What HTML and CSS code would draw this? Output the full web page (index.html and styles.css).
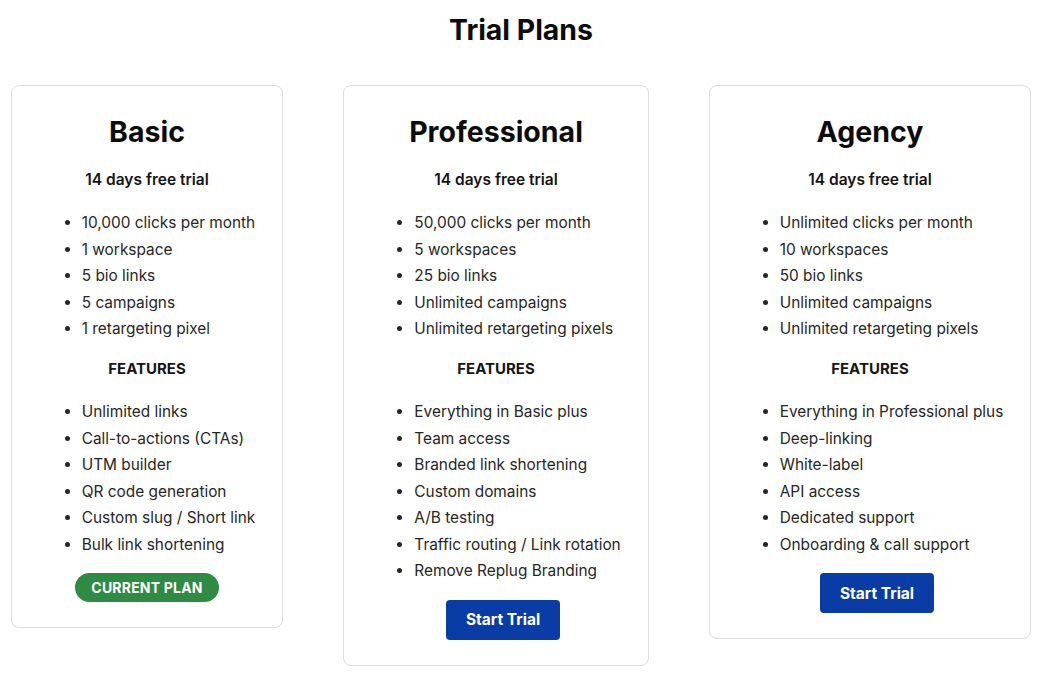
FILE: index.html
```html
<!DOCTYPE html>
<html lang="en">
<head>
<meta charset="utf-8">
<title>Trial Plans</title>
<link rel="stylesheet" href="styles.css">
</head>
<body>
<main class="page">
  <h1 class="page-title">Trial Plans</h1>
  <div class="plans">
    <section class="card">
      <h2 class="plan-name">Basic</h2>
      <p class="trial">14 days free trial</p>
      <ul class="list">
        <li>10,000 clicks per month</li>
        <li>1 workspace</li>
        <li>5 bio links</li>
        <li>5 campaigns</li>
        <li>1 retargeting pixel</li>
      </ul>
      <h3 class="features">FEATURES</h3>
      <ul class="list">
        <li>Unlimited links</li>
        <li>Call-to-actions (CTAs)</li>
        <li>UTM builder</li>
        <li>QR code generation</li>
        <li>Custom slug / Short link</li>
        <li>Bulk link shortening</li>
      </ul>
      <span class="current">CURRENT PLAN</span>
    </section>
    <section class="card">
      <h2 class="plan-name">Professional</h2>
      <p class="trial">14 days free trial</p>
      <ul class="list">
        <li>50,000 clicks per month</li>
        <li>5 workspaces</li>
        <li>25 bio links</li>
        <li>Unlimited campaigns</li>
        <li>Unlimited retargeting pixels</li>
      </ul>
      <h3 class="features">FEATURES</h3>
      <ul class="list">
        <li>Everything in Basic plus</li>
        <li>Team access</li>
        <li>Branded link shortening</li>
        <li>Custom domains</li>
        <li>A/B testing</li>
        <li>Traffic routing / Link rotation</li>
        <li>Remove Replug Branding</li>
      </ul>
      <button class="trial-btn" type="button">Start Trial</button>
    </section>
    <section class="card">
      <h2 class="plan-name">Agency</h2>
      <p class="trial">14 days free trial</p>
      <ul class="list">
        <li>Unlimited clicks per month</li>
        <li>10 workspaces</li>
        <li>50 bio links</li>
        <li>Unlimited campaigns</li>
        <li>Unlimited retargeting pixels</li>
      </ul>
      <h3 class="features">FEATURES</h3>
      <ul class="list">
        <li>Everything in Professional plus</li>
        <li>Deep-linking</li>
        <li>White-label</li>
        <li>API access</li>
        <li>Dedicated support</li>
        <li>Onboarding &amp; call support</li>
      </ul>
      <button class="trial-btn" type="button">Start Trial</button>
    </section>
  </div>
</main>
</body>
</html>
```

FILE: styles.css
```css
* { box-sizing: border-box; }

body {
  margin: 0;
  background: #ffffff;
  color: #111111;
  font-family: Inter, "Noto Sans", "Liberation Sans", sans-serif;
}

.page {
  width: 1042px;
  padding-top: 12px;
}

.page-title {
  margin: 0 0 37px;
  text-align: center;
  font-size: 28.4px;
  line-height: 36px;
  font-weight: 700;
  color: #0c0c0c;
}

.plans {
  display: flex;
  justify-content: center;
  align-items: flex-start;
  gap: 60px;
}

.card {
  display: flex;
  flex-direction: column;
  align-items: center;
  padding: 28px 28px 25px;
  border: 1px solid #dcdcdc;
  border-radius: 8px;
  background: #fff;
}

.plan-name {
  margin: 0 0 19px;
  font-size: 28.5px;
  line-height: 35px;
  font-weight: 700;
  color: #0c0c0c;
}

.trial {
  margin: 0 0 20px;
  font-size: 15.5px;
  line-height: 24px;
  font-weight: 600;
  color: #151515;
}

.list {
  align-self: stretch;
  margin: 0 -1px 0 0;
  padding-left: 42px;
  list-style: disc;
  font-size: 15.4px;
  line-height: 22.5px;
  color: #262626;
}

.list li {
  margin-bottom: 4px;
  white-space: nowrap;
}

.features {
  margin: 13px 0 21px;
  font-size: 15px;
  line-height: 22.5px;
  font-weight: 700;
  color: #151515;
}

.current {
  margin-top: 13px;
  display: inline-flex;
  align-items: center;
  height: 29px;
  padding: 0 16px;
  border-radius: 15px;
  background: #2f8a43;
  color: #ffffff;
  font-size: 14px;
  font-weight: 700;
  letter-spacing: 0.2px;
}

.trial-btn {
  margin: 13px 0 0 14px;
  height: 40px;
  padding: 0 20px;
  border: none;
  border-radius: 4px;
  background: #0a3ca5;
  color: #ffffff;
  font-family: inherit;
  font-size: 15.5px;
  font-weight: 700;
}
```
